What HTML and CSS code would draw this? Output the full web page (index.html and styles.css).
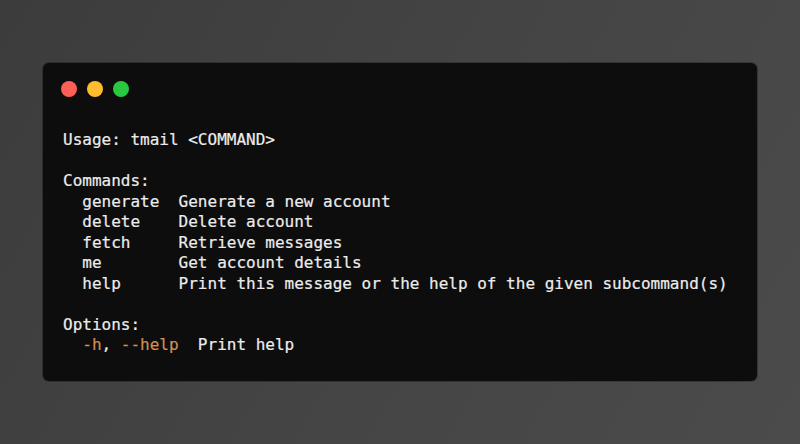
FILE: index.html
```html
<!DOCTYPE html>
<html lang="en">
<head>
<meta charset="UTF-8">
<meta name="viewport" content="width=device-width, initial-scale=1.0">
<title>tmail --help</title>
<link rel="stylesheet" href="styles.css">
</head>
<body>
    <div class="terminal">
        <div class="titleBar">
            <span class="dot red"></span>
            <span class="dot yellow"></span>
            <span class="dot green"></span>
        </div>
<pre class="output">Usage: tmail &lt;COMMAND&gt;

Commands:
  generate  Generate a new account
  delete    Delete account
  fetch     Retrieve messages
  me        Get account details
  help      Print this message or the help of the given subcommand(s)

Options:
  <span class="flag">-h</span>, <span class="flag">--help</span>  Print help</pre>
    </div>
</body>
</html>
```
FILE: styles.css
```css
html, body {
    height: 100%;
}

body {
    display: flex;
    justify-content: center;
    align-items: center;
    margin: 0;
    background: linear-gradient(120deg, #3c3c3c 0%, #454545 55%, #4b4b4b 100%);
}

.terminal {
    width: 714px;
    height: 318px;
    box-sizing: border-box;
    background-color: #0d0d0d;
    border-radius: 6px;
    box-shadow: 0 0 0 1px rgba(0, 0, 0, 0.25);
}

.titleBar {
    display: flex;
    gap: 10px;
    padding: 18px 18px 0;
}

.dot {
    width: 16px;
    height: 16px;
    border-radius: 50%;
}

.red { background-color: #ff5f57; }
.yellow { background-color: #febc2e; }
.green { background-color: #28c840; }

.output {
    margin: 33px 0 0;
    padding: 0 20px;
    font-family: "DejaVu Sans Mono", "Liberation Mono", monospace;
    font-size: 16px;
    line-height: 20.5px;
    color: #ececec;
    -webkit-text-stroke: 0.2px #ececec;
}

.flag {
    color: #d18f52;
    -webkit-text-stroke-color: #d18f52;
}
```
